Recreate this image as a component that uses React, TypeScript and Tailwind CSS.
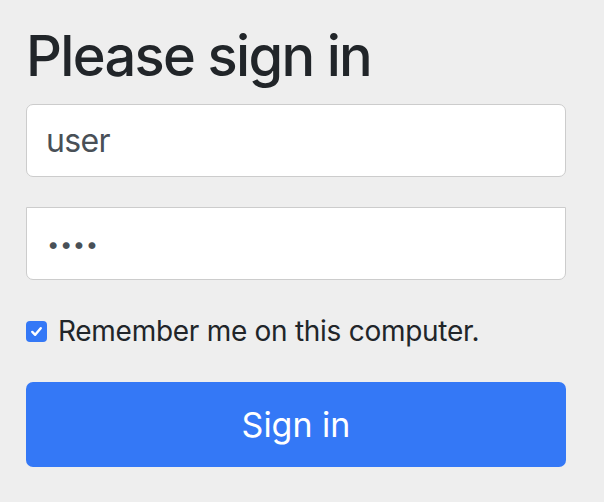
import { useState } from "react";

const font = { fontFamily: "Inter, 'Liberation Sans', sans-serif" };

export default function App() {
  const [remember, setRemember] = useState(true);

  return (
    <div className="min-h-[502px] w-full bg-[#eeeeee] px-[26px] pt-[23px]" style={font}>
      <form className="w-[540px]" onSubmit={(e) => e.preventDefault()}>
        <h2 className="mb-[14px] text-[56px] leading-[67px] font-medium tracking-[-0.03em] text-[#212529]">
          Please sign in
        </h2>

        <div className="flex flex-col gap-[30px]">
          <input
            type="text"
            defaultValue="user"
            className="h-[73px] w-full rounded-[7px] border border-[#cccccc] bg-white px-[19px] text-[32px] tracking-[-0.02em] text-[#495057] outline-none"
          />
          <input
            type="password"
            defaultValue="user"
            className="h-[73px] w-full rounded-b-[7px] border border-[#cccccc] bg-white px-[20px] text-[22px] tracking-[0.5px] text-[#495057] outline-none"
          />
        </div>

        <label className="mt-[30px] flex h-[42px] cursor-pointer items-center gap-[11px] text-[28px] tracking-[-0.01em] text-[#212529]">
          <input
            type="checkbox"
            className="sr-only"
            checked={remember}
            onChange={(e) => setRemember(e.currentTarget.checked)}
          />
          <span
            className={
              remember
                ? "flex h-[21px] w-[21px] items-center justify-center rounded-[4px] bg-[#3478f6]"
                : "flex h-[21px] w-[21px] items-center justify-center rounded-[4px] border border-[#b5b5b5] bg-white"
            }
          >
            {remember && (
              <svg viewBox="0 0 16 16" className="h-[15px] w-[15px]">
                <path
                  d="M3.5 8.5 L6.6 11.5 L12.5 4.5"
                  fill="none"
                  stroke="#ffffff"
                  strokeWidth="2.6"
                  strokeLinecap="round"
                  strokeLinejoin="round"
                />
              </svg>
            )}
          </span>
          Remember me on this computer.
        </label>

        <button
          type="submit"
          className="mt-[30px] h-[85px] w-full rounded-[7px] bg-[#3478f6] text-[34px] text-white"
        >
          Sign in
        </button>
      </form>
    </div>
  );
}
